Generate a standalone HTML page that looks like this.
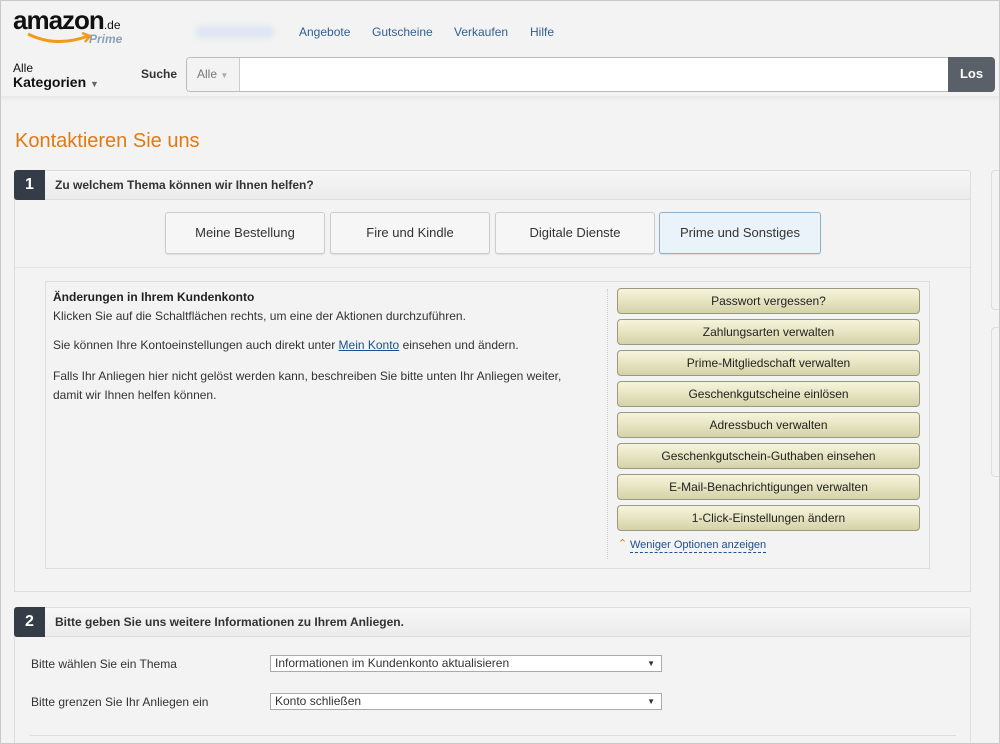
<!DOCTYPE html><html><head><meta charset="utf-8"><style>
*{box-sizing:border-box;margin:0;padding:0}
html,body{width:1000px;height:744px;overflow:hidden}
body{background:#f3f3f3;font-family:"Liberation Sans",Arial,sans-serif;font-size:12px;color:#333;position:relative}
.a{position:absolute}
a{color:#1d4f91;text-decoration:none}
.nav{top:25px;font-size:12px;color:#2f5f92}
.hdr{border:1px solid #ddd;border-radius:3px;background:linear-gradient(#f7f7f7,#ebebeb);height:30px}
.num{background:#333c47;color:#fff;font-weight:bold;font-size:16px;width:31px;height:30px;text-align:center;line-height:30px;border-radius:3px 0 0 3px}
.tab{top:212px;height:42px;width:160px;border:1px solid #ccc;border-radius:3px;background:#f6f6f6;text-align:center;line-height:40px;font-size:13px;color:#333;box-shadow:0 1px 1px #ddd}
.btn{left:617px;width:303px;height:26px;border:1px solid #9a9a80;border-radius:4px;background:linear-gradient(#f6f5dc,#e3e1bc 60%,#d4d2a8);text-align:center;line-height:24px;font-size:12px;color:#222}
.sel{left:270px;width:392px;height:17px;border:1px solid #aaa;background:#fff;font-size:12px;line-height:15px;padding-left:4px}
.sel:after{content:"▼";position:absolute;right:6px;top:0;font-size:8px}
</style></head><body>
<div class="a" style="left:0;top:0;width:1000px;height:744px;border:1px solid #c8c8c8;z-index:5;pointer-events:none"></div>
<div class="a" style="left:13px;top:5px;font-size:26px;font-weight:bold;color:#111;letter-spacing:-1px">amazon<span style="font-size:12px;letter-spacing:0;font-weight:normal">.de</span></div>
<svg class="a" style="left:26px;top:30px" width="70" height="16"><path d="M2 4 Q30 18 62 6" stroke="#f29a1d" stroke-width="3" fill="none"/><path d="M56 3 L64 6 L59 12" stroke="#f29a1d" stroke-width="2.5" fill="none"/></svg>
<div class="a" style="left:89px;top:32px;font-size:12px;font-style:italic;font-weight:bold;color:#8aa0b4">Prime</div>
<div class="a" style="left:195px;top:26px;width:80px;height:12px;background:#dce6f1;border-radius:6px;filter:blur(3px)"></div>
<div class="a nav" style="left:299px">Angebote</div>
<div class="a nav" style="left:372px">Gutscheine</div>
<div class="a nav" style="left:454px">Verkaufen</div>
<div class="a nav" style="left:530px">Hilfe</div>
<div class="a" style="left:13px;top:61px;font-size:12px;color:#111">Alle</div>
<div class="a" style="left:13px;top:74px;font-size:14px;font-weight:bold;color:#111">Kategorien <span style="font-size:9px;color:#666">▼</span></div>
<div class="a" style="left:141px;top:67px;font-weight:bold;color:#333">Suche</div>
<div class="a" style="left:186px;top:57px;width:808px;height:35px;border:1px solid #bbb;border-radius:4px;background:#fff"></div>
<div class="a" style="left:187px;top:58px;width:53px;height:33px;border-right:1px solid #ccc;background:#f3f3f3;border-radius:3px 0 0 3px;color:#777;line-height:32px;padding-left:10px">Alle <span style="font-size:8px;color:#aaa">▼</span></div>
<div class="a" style="left:948px;top:57px;width:47px;height:35px;background:#5a6068;border-radius:0 4px 4px 0;color:#fff;font-weight:bold;font-size:13px;text-align:center;line-height:34px">Los</div>
<div class="a" style="left:0;top:96px;width:1000px;height:6px;background:linear-gradient(#e8e8e8,#f3f3f3)"></div>
<div class="a" style="left:15px;top:130px;font-size:20px;color:#e47911">Kontaktieren Sie uns</div>

<div class="a" style="left:14px;top:198px;width:957px;height:394px;border:1px solid #ddd;border-top:0"></div>
<div class="a hdr" style="left:14px;top:170px;width:957px"></div>
<div class="a num" style="left:14px;top:170px">1</div>
<div class="a" style="left:55px;top:178px;font-weight:bold;color:#333">Zu welchem Thema können wir Ihnen helfen?</div>
<div class="a tab" style="left:165px">Meine Bestellung</div>
<div class="a tab" style="left:330px">Fire und Kindle</div>
<div class="a tab" style="left:495px">Digitale Dienste</div>
<div class="a tab" style="left:659px;width:162px;background:#eaf3f9;border-color:#8fb2cc">Prime und Sonstiges</div>
<div class="a" style="left:15px;top:267px;width:955px;border-top:1px solid #e2e2e2"></div>
<div class="a" style="left:45px;top:281px;width:885px;height:288px;border:1px solid #ddd"></div>
<div class="a" style="left:607px;top:289px;height:270px;border-left:1px dotted #ccc"></div>
<div class="a" style="left:53px;top:290px;font-weight:bold;color:#222">Änderungen in Ihrem Kundenkonto</div>
<div class="a" style="left:53px;top:309px;color:#333">Klicken Sie auf die Schaltflächen rechts, um eine der Aktionen durchzuführen.</div>
<div class="a" style="left:53px;top:338px;color:#333">Sie können Ihre Kontoeinstellungen auch direkt unter <a style="text-decoration:underline">Mein Konto</a> einsehen und ändern.</div>
<div class="a" style="left:53px;top:367px;color:#333;line-height:19px">Falls Ihr Anliegen hier nicht gelöst werden kann, beschreiben Sie bitte unten Ihr Anliegen weiter,<br>damit wir Ihnen helfen können.</div>
<div class="a btn" style="top:288px">Passwort vergessen?</div>
<div class="a btn" style="top:319px">Zahlungsarten verwalten</div>
<div class="a btn" style="top:350px">Prime-Mitgliedschaft verwalten</div>
<div class="a btn" style="top:381px">Geschenkgutscheine einlösen</div>
<div class="a btn" style="top:412px">Adressbuch verwalten</div>
<div class="a btn" style="top:443px">Geschenkgutschein-Guthaben einsehen</div>
<div class="a btn" style="top:474px">E-Mail-Benachrichtigungen verwalten</div>
<div class="a btn" style="top:505px">1-Click-Einstellungen ändern</div>
<div class="a" style="left:618px;top:537px;font-size:11px;color:#e47911">⌃</div>
<div class="a" style="left:630px;top:539px;font-size:11px;color:#1d4f91;border-bottom:1px dashed #1d4f91;line-height:13px">Weniger Optionen anzeigen</div>

<div class="a" style="left:14px;top:636px;width:957px;height:120px;border:1px solid #ddd;border-top:0"></div>
<div class="a hdr" style="left:14px;top:607px;width:957px"></div>
<div class="a num" style="left:14px;top:607px">2</div>
<div class="a" style="left:55px;top:615px;font-weight:bold;color:#333">Bitte geben Sie uns weitere Informationen zu Ihrem Anliegen.</div>
<div class="a" style="left:31px;top:657px;color:#333">Bitte wählen Sie ein Thema</div>
<div class="a sel" style="top:655px">Informationen im Kundenkonto aktualisieren</div>
<div class="a" style="left:31px;top:695px;color:#333">Bitte grenzen Sie Ihr Anliegen ein</div>
<div class="a sel" style="top:693px">Konto schließen</div>
<div class="a" style="left:30px;top:735px;width:926px;border-top:1px solid #ddd"></div>

<div class="a" style="left:991px;top:170px;width:12px;height:140px;border:1px solid #ddd;border-radius:4px"></div>
<div class="a" style="left:991px;top:327px;width:12px;height:150px;border:1px solid #ddd;border-radius:4px"></div>
</body></html>
